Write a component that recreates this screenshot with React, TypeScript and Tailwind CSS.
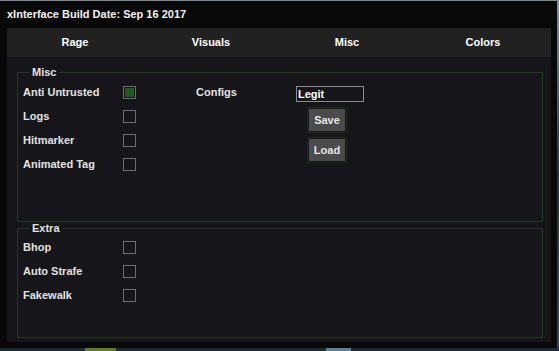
import { useState } from 'react';

const font = { fontFamily: '"Liberation Sans", Arial, sans-serif' };

const tabs = ['Rage', 'Visuals', 'Misc', 'Colors'];

function Check({ checked, onToggle }: { checked: boolean; onToggle: () => void }) {
  return (
    <button
      type="button"
      onClick={onToggle}
      className="w-[13px] h-[13px] border border-[#6e6e6e] p-[1px] shrink-0"
    >
      <span className={`block w-full h-full ${checked ? 'bg-[#1f5a1f]' : 'bg-transparent'}`} />
    </button>
  );
}

function Row({ label, checked, onToggle }: { label: string; checked: boolean; onToggle: () => void }) {
  return (
    <div className="flex items-center h-[24px]">
      <span className="w-[100px] text-[11px] font-bold text-[#e2e2e2] leading-none">{label}</span>
      <Check checked={checked} onToggle={onToggle} />
    </div>
  );
}

function Group({ title, className, children }: { title: string; className: string; children: React.ReactNode }) {
  return (
    <fieldset className={`border border-[#233a23] mx-0 pl-[5px] ${className}`}>
      <legend className="ml-[6px] px-[3px] text-[11px] font-bold text-[#e2e2e2] leading-[13px]">{title}</legend>
      {children}
    </fieldset>
  );
}

export default function App() {
  const [checks, setChecks] = useState<Record<string, boolean>>({ 'Anti Untrusted': true });
  const toggle = (k: string) => setChecks((c) => ({ ...c, [k]: !c[k] }));
  const [config, setConfig] = useState('Legit');

  return (
    <div className="w-[559px] h-[351px] bg-[#1b2630] flex flex-col overflow-hidden" style={font}>
      <div className="h-[1px] bg-[#7a858e]" />
      <div className="flex flex-1">
        <div className="w-[557px] h-[347px] bg-[#080808] flex flex-col pl-[7px] pr-[6px]">
          <div className="h-[27px] flex items-center text-[11px] font-bold text-[#f2f2f2]">
            xInterface Build Date: Sep 16 2017
          </div>
          <div className="w-[544px] flex flex-col bg-[#161519] h-[314px]">
            <div className="h-[29px] bg-[#212121] grid grid-cols-4">
              {tabs.map((t) => (
                <button key={t} type="button" className="text-[11px] font-bold text-white">
                  {t}
                </button>
              ))}
            </div>
            <div className="flex flex-col pl-[10px] pr-[8px] pt-[9px]">
              <Group title="Misc" className="h-[156px]">
                <div className="flex pt-[1px]">
                  <div className="w-[173px]">
                    {['Anti Untrusted', 'Logs', 'Hitmarker', 'Animated Tag'].map((k) => (
                      <Row key={k} label={k} checked={!!checks[k]} onToggle={() => toggle(k)} />
                    ))}
                  </div>
                  <div className="flex">
                    <div className="w-[100px] h-[24px] flex items-center text-[11px] font-bold text-[#e2e2e2]">Configs</div>
                    <div className="flex flex-col">
                      <input
                        value={config}
                        onChange={(e) => setConfig(e.target.value)}
                        className="mt-[6px] w-[68px] h-[16px] border border-[#8a8a8a] bg-transparent px-[1px] text-[11px] font-bold text-white outline-none"
                      />
                      <div className="ml-[11px] mt-[5px] flex flex-col gap-[4px]">
                        {['Save', 'Load'].map((b) => (
                          <button
                            key={b}
                            type="button"
                            className="w-[40px] h-[26px] border border-[#1d2b1d] p-[1px]"
                          >
                            <span className="flex items-center justify-center w-full h-full bg-[#4b4b4b] text-[11px] font-bold text-[#e6e6e6]">
                              {b}
                            </span>
                          </button>
                        ))}
                      </div>
                    </div>
                  </div>
                </div>
              </Group>
              <Group title="Extra" className="h-[116px]">
                {['Bhop', 'Auto Strafe', 'Fakewalk'].map((k) => (
                  <Row key={k} label={k} checked={!!checks[k]} onToggle={() => toggle(k)} />
                ))}
              </Group>
            </div>
          </div>
        </div>
        <div className="flex-1 bg-gradient-to-b from-[#8a939b] via-[#2a333b] to-[#3b4650]" />
      </div>
      <div className="h-[3px] bg-[#1d2b37] flex">
        <span className="ml-[85px] w-[31px] bg-[#5e7d27]" />
        <span className="ml-[210px] w-[25px] bg-[#5d7f99]" />
      </div>
    </div>
  );
}
